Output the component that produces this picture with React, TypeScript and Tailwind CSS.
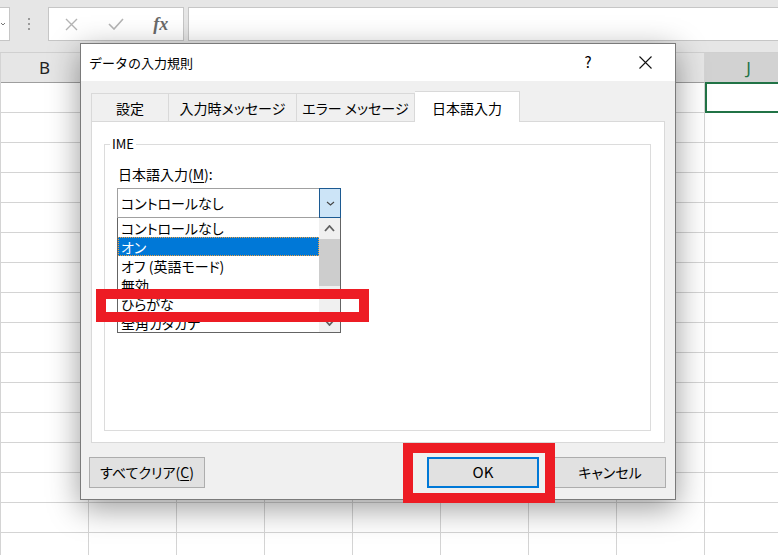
import React from 'react';

const UI = "font-['Noto_Sans_CJK_JP','Noto_Sans',sans-serif] [font-feature-settings:'palt']";

const COLS = ['B', 'C', 'D', 'E', 'F', 'G', 'H', 'I', 'J'];
const ROWS = Array.from({ length: 16 }, (_, i) => i);

const ITEMS = ['コントロールなし', 'オン', 'オフ (英語モード)', '無効', 'ひらがな', '全角カタカナ'];

function Chevron({ up = false, color = '#606060', w = 10, h = 6, sw = 1.6 }: { up?: boolean; color?: string; w?: number; h?: number; sw?: number }) {
    return (
        <svg width={w} height={h} viewBox={`0 0 ${w} ${h}`} fill="none">
            {up
                ? <path d={`M1 ${h - 1} L${w / 2} 1 L${w - 1} ${h - 1}`} stroke={color} strokeWidth={sw} />
                : <path d={`M1 1 L${w / 2} ${h - 1} L${w - 1} 1`} stroke={color} strokeWidth={sw} />}
        </svg>
    );
}

function FormulaBar() {
    return (
        <div className="h-[53px] bg-[#e6e6e6] border-b border-[#d0d0d0] pt-[7px]">
            <div className="flex h-[34px]">
                {/* name box (cut off) */}
                <div className="w-[10px] h-full bg-white border border-l-0 border-[#c6c6c6] flex items-center">
                    <Chevron w={6} h={4} sw={1} color="#777" />
                </div>
                {/* grip */}
                <div className="w-[38px] flex flex-col items-center justify-center gap-[3px]">
                    <span className="w-[2px] h-[2px] bg-[#9a9a9a]" />
                    <span className="w-[2px] h-[2px] bg-[#9a9a9a]" />
                    <span className="w-[2px] h-[2px] bg-[#9a9a9a]" />
                </div>
                {/* cancel / enter / fx */}
                <div className="w-[136px] h-full bg-white border border-[#c6c6c6] flex items-center">
                    <div className="w-[45px] flex justify-center">
                        <svg width="13" height="13" viewBox="0 0 13 13">
                            <path d="M1 1 L12 12 M12 1 L1 12" stroke="#b4b4b4" strokeWidth="1.4" />
                        </svg>
                    </div>
                    <div className="w-[45px] flex justify-center">
                        <svg width="16" height="12" viewBox="0 0 16 12" fill="none">
                            <path d="M1 6 L6 11 L15 1" stroke="#b4b4b4" strokeWidth="1.6" />
                        </svg>
                    </div>
                    <div className="w-[45px] text-center font-['Liberation_Serif',serif] italic font-bold text-[18px] text-[#6a6a6a] leading-none">
                        fx
                    </div>
                </div>
                <div className="ml-[4px] flex-1 h-full bg-white border border-r-0 border-[#c6c6c6]" />
            </div>
        </div>
    );
}

function Sheet() {
    return (
        <div>
            <div className="flex h-[30px]">
                <div className="w-px shrink-0 bg-[#d4d4d4]" />
                {COLS.map((c) =>
                    c === 'J' ? (
                        <div key={c} className="w-[88px] shrink-0 h-full bg-[#d2d2d2] border-r border-[#c0c0c0] flex items-center justify-center font-['Noto_Sans',sans-serif] text-[17px] text-[#217346]">
                            {c}
                        </div>
                    ) : (
                        <div key={c} className="w-[88px] shrink-0 h-full bg-[#e6e6e6] border-r border-b border-r-[#d4d4d4] border-b-[#9e9e9e] flex items-center justify-center font-['Noto_Sans',sans-serif] text-[17px] text-[#222]">
                            {c}
                        </div>
                    )
                )}
            </div>
            {ROWS.map((r) => (
                <div key={r} className="flex h-[30px]">
                    <div className="w-px shrink-0 bg-[#d4d4d4]" />
                    {COLS.map((c) => (
                        <div key={c} className="relative w-[88px] shrink-0 h-full bg-white border-r border-b border-[#d4d4d4]">
                            {r === 0 && c === 'J' && (
                                <div className="absolute left-0 -top-px w-[90px] h-[31px] border-2 border-[#217346]" />
                            )}
                        </div>
                    ))}
                </div>
            ))}
        </div>
    );
}

function ImeList() {
    return (
        <div className="w-[224px] h-[115px] flex border border-t-0 border-[#646464] bg-white overflow-hidden">
            <div className="flex-1 flex flex-col">
                {ITEMS.map((item) =>
                    item === 'オン' ? (
                        <div key={item} className="h-[19px] shrink-0 bg-[#0078d7] text-white border border-dotted border-[#f0a040] pl-[2px] flex items-center text-[14px] leading-none">
                            {item}
                        </div>
                    ) : (
                        <div key={item} className="h-[19px] shrink-0 pl-[3px] flex items-center text-[14px] leading-none text-black">
                            {item}
                        </div>
                    )
                )}
            </div>
            <div className="w-[21px] bg-[#f0f0f0] flex flex-col">
                <div className="h-[20px] flex items-center justify-center">
                    <Chevron up w={11} h={7} sw={1.8} />
                </div>
                <div className="mt-px h-[47px] bg-[#cdcdcd]" />
                <div className="flex-1" />
                <div className="h-[20px] flex items-center justify-center">
                    <Chevron w={11} h={7} sw={1.8} />
                </div>
            </div>
        </div>
    );
}

function Dialog() {
    return (
        <div className={`absolute left-[80px] top-[43px] w-[596px] h-[457px] bg-[#f0f0f0] border border-[#7a7a7a] shadow-[0_8px_30px_rgba(0,0,0,0.4)] ${UI}`}>
            {/* title bar */}
            <div className="h-[37px] bg-white flex items-center pl-[8px] pr-[20px]">
                <span className="flex-1 text-[13px] text-black [font-feature-settings:normal]">データの入力規則</span>
                <span className="w-[20px] text-center text-[15px] text-black">?</span>
                <span className="ml-[37px] w-[20px] flex justify-center">
                    <svg width="13" height="13" viewBox="0 0 13 13">
                        <path d="M0.5 0.5 L12.5 12.5 M12.5 0.5 L0.5 12.5" stroke="#111" strokeWidth="1.1" />
                    </svg>
                </span>
            </div>

            <div className="px-[10px] pt-[10px]">
                {/* tabs */}
                <div className="relative z-10 flex items-end h-[30px] text-[14px] text-black">
                    <div className="w-[78px] h-[28px] border-l border-t border-r border-[#d9d9d9] flex items-center justify-center pt-[2px]">設定</div>
                    <div className="w-[128px] h-[28px] border-t border-r border-[#d9d9d9] flex items-center justify-center pt-[2px]">入力時メッセージ</div>
                    <div className="w-[118px] h-[28px] border-t border-r border-[#d9d9d9] flex items-center justify-center pt-[2px]">エラー メッセージ</div>
                    <div className="w-[105px] h-[31px] mb-[-1px] bg-white border-t border-r border-[#d9d9d9] flex items-center justify-center pt-[2px]">日本語入力</div>
                </div>

                {/* tab panel */}
                <div className="h-[322px] bg-white border border-[#d9d9d9] pt-[22px] pl-[12px] pr-[13px]">
                    <div className="relative h-[287px] border border-[#dcdcdc] pl-[12px] pt-[20px]">
                        <span className="absolute -top-[10px] left-[5px] px-[2px] bg-white text-[13px] leading-[18px] text-black">IME</span>
                        <div className="pl-px text-[14px] leading-[18px] text-black">
                            日本語入力(<span className="underline underline-offset-2">M</span>):
                        </div>
                        <div className="mt-[5px] w-[224px] h-[30px] border border-[#a0a0a0] flex bg-white">
                            <div className="flex-1 flex items-center pl-[3px] text-[14px] text-black">コントロールなし</div>
                            <div className="w-[22px] -mt-px -mb-px -mr-px bg-[#cce4f7] border border-[#1c5a92] flex items-center justify-center">
                                <Chevron w={9} h={5} sw={1.1} color="#444" />
                            </div>
                        </div>
                        <ImeList />
                    </div>
                </div>

                {/* buttons */}
                <div className="mt-[14px] flex items-center text-[14px] text-black">
                    <button className="-ml-[2px] w-[116px] h-[31px] bg-[#e1e1e1] border border-[#adadad] flex items-center justify-center">
                        すべてクリア(<span className="underline underline-offset-2">C</span>)
                    </button>
                    <div className="flex-1" />
                    <button className="w-[112px] h-[31px] bg-[#e1e1e1] border-2 border-[#0078d7] flex items-center justify-center text-[15px]">OK</button>
                    <button className="ml-[15px] -mr-px w-[112px] h-[31px] bg-[#e1e1e1] border border-[#adadad] flex items-center justify-center">キャンセル</button>
                </div>
            </div>
        </div>
    );
}

export default function App() {
    return (
        <div className="relative w-[778px] h-[555px] overflow-hidden bg-white">
            <FormulaBar />
            <Sheet />
            <Dialog />

            {/* annotation boxes */}
            <div className="absolute left-[96px] top-[289px] w-[273px] h-[33px] border-[10px] border-[#ed1c24]" />
            <div className="absolute left-[403px] top-[443px] w-[152px] h-[60px] border-[10px] border-[#ed1c24]" />
        </div>
    );
}
